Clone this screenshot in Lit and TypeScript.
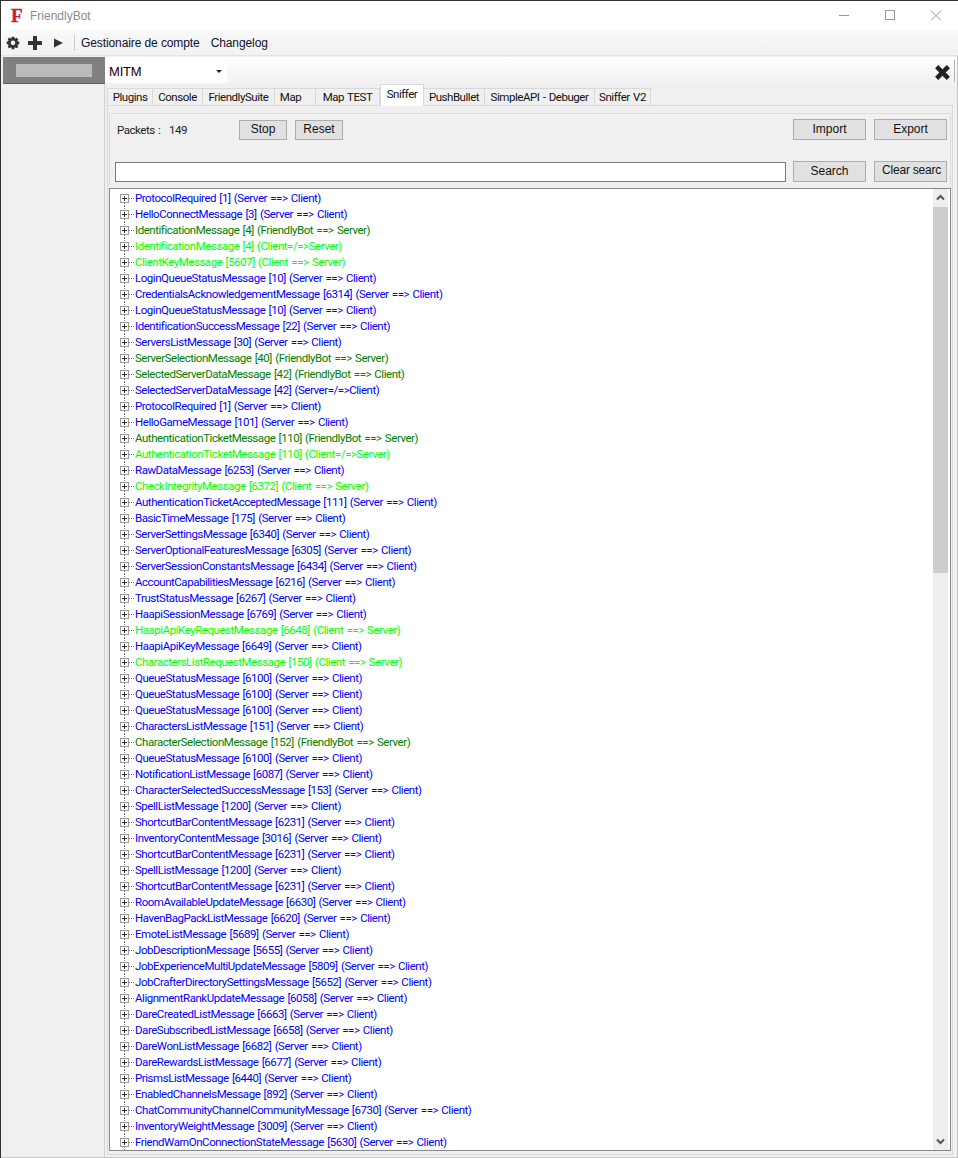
import { LitElement, html, css } from "lit";
import { customElement } from "lit/decorators.js";

type Row = [string, "b" | "g" | "l"];
const raw = `b ProtocolRequired [1] (Server ==> Client)
b HelloConnectMessage [3] (Server ==> Client)
g IdentificationMessage [4] (FriendlyBot ==> Server)
l IdentificationMessage [4] (Client=/=>Server)
l ClientKeyMessage [5607] (Client ==> Server)
b LoginQueueStatusMessage [10] (Server ==> Client)
b CredentialsAcknowledgementMessage [6314] (Server ==> Client)
b LoginQueueStatusMessage [10] (Server ==> Client)
b IdentificationSuccessMessage [22] (Server ==> Client)
b ServersListMessage [30] (Server ==> Client)
g ServerSelectionMessage [40] (FriendlyBot ==> Server)
g SelectedServerDataMessage [42] (FriendlyBot ==> Client)
b SelectedServerDataMessage [42] (Server=/=>Client)
b ProtocolRequired [1] (Server ==> Client)
b HelloGameMessage [101] (Server ==> Client)
g AuthenticationTicketMessage [110] (FriendlyBot ==> Server)
l AuthenticationTicketMessage [110] (Client=/=>Server)
b RawDataMessage [6253] (Server ==> Client)
l CheckIntegrityMessage [6372] (Client ==> Server)
b AuthenticationTicketAcceptedMessage [111] (Server ==> Client)
b BasicTimeMessage [175] (Server ==> Client)
b ServerSettingsMessage [6340] (Server ==> Client)
b ServerOptionalFeaturesMessage [6305] (Server ==> Client)
b ServerSessionConstantsMessage [6434] (Server ==> Client)
b AccountCapabilitiesMessage [6216] (Server ==> Client)
b TrustStatusMessage [6267] (Server ==> Client)
b HaapiSessionMessage [6769] (Server ==> Client)
l HaapiApiKeyRequestMessage [6648] (Client ==> Server)
b HaapiApiKeyMessage [6649] (Server ==> Client)
l CharactersListRequestMessage [150] (Client ==> Server)
b QueueStatusMessage [6100] (Server ==> Client)
b QueueStatusMessage [6100] (Server ==> Client)
b QueueStatusMessage [6100] (Server ==> Client)
b CharactersListMessage [151] (Server ==> Client)
g CharacterSelectionMessage [152] (FriendlyBot ==> Server)
b QueueStatusMessage [6100] (Server ==> Client)
b NotificationListMessage [6087] (Server ==> Client)
b CharacterSelectedSuccessMessage [153] (Server ==> Client)
b SpellListMessage [1200] (Server ==> Client)
b ShortcutBarContentMessage [6231] (Server ==> Client)
b InventoryContentMessage [3016] (Server ==> Client)
b ShortcutBarContentMessage [6231] (Server ==> Client)
b SpellListMessage [1200] (Server ==> Client)
b ShortcutBarContentMessage [6231] (Server ==> Client)
b RoomAvailableUpdateMessage [6630] (Server ==> Client)
b HavenBagPackListMessage [6620] (Server ==> Client)
b EmoteListMessage [5689] (Server ==> Client)
b JobDescriptionMessage [5655] (Server ==> Client)
b JobExperienceMultiUpdateMessage [5809] (Server ==> Client)
b JobCrafterDirectorySettingsMessage [5652] (Server ==> Client)
b AlignmentRankUpdateMessage [6058] (Server ==> Client)
b DareCreatedListMessage [6663] (Server ==> Client)
b DareSubscribedListMessage [6658] (Server ==> Client)
b DareWonListMessage [6682] (Server ==> Client)
b DareRewardsListMessage [6677] (Server ==> Client)
b PrismsListMessage [6440] (Server ==> Client)
b EnabledChannelsMessage [892] (Server ==> Client)
b ChatCommunityChannelCommunityMessage [6730] (Server ==> Client)
b InventoryWeightMessage [3009] (Server ==> Client)
b FriendWarnOnConnectionStateMessage [5630] (Server ==> Client)`;
const rows: Row[] = raw.split("\n").map((l) => [l.slice(2), l[0] as Row[1]]);

const tabs: [string, number, number][] = [
  ["Plugins", 46, 0], ["Console", 50, 0], ["FriendlySuite", 72, 0], ["Map", 41, 9], ["Map TEST", 64, 0],
  ["Sniffer", 44, 0], ["PushBullet", 61, 0], ["SimpleAPI - Debuger", 110, 0], ["Sniffer V2", 56, 0],
];

const gearPath = "M6.2 0h3.6l.4 2.1 1.2.5 1.8-1.2 2.4 2.4-1.2 1.8.5 1.2 2.1.4v3.6l-2.1.4-.5 1.2 1.2 1.8-2.4 2.4-1.8-1.2-1.2.5-.4 2.1H6.2l-.4-2.1-1.2-.5-1.8 1.2-2.4-2.4 1.2-1.8-.5-1.2L-1 10.6V7l2.1-.4.5-1.2-1.2-1.800 2.4-2.400 1.800 1.200 1.200-.5z";

@customElement("app-root")
export class AppRoot extends LitElement {
  static styles = css`
    :host {
      display: flex; flex-direction: column; width: 958px; height: 1158px; box-sizing: border-box;
      background: #f0f0f0; border-top: 1px solid #333; border-left: 1px solid #333; overflow: hidden;
      font: 12px "Liberation Sans", Arial, sans-serif; color: #000;
    }
    .narrow { font: 11.5px Roboto, sans-serif; letter-spacing: -0.46px; word-spacing: 0.9px; }
    .title { height: 29px; flex: none; background: #fff; display: flex; align-items: center; color: #8c8c8c; }
    .logo { width: 13px; margin-left: 10px; font: bold 19px "Liberation Serif", serif; color: #c4202c; line-height: 16px; -webkit-text-stroke: 0.4px #c4202c; }
    .appname { margin-left: 6px; font-size: 12px; }
    .caps { margin-left: auto; display: flex; align-items: center; margin-right: -1px; }
    .caps svg { display: block; width: 46px; height: 29px; }
    .toolbar { height: 26px; flex: none; display: flex; align-items: center; background: linear-gradient(#fafafa, #f1f1f1); }
    .tools { display: flex; align-items: center; padding-left: 5px; }
    .tools svg { display: block; }
    .plus { margin-left: 7px; }
    .play { margin-left: 10px; }
    .sep { width: 1px; height: 16px; background: #c9c9c9; margin: 0 6px 0 9px; }
    .menu { display: flex; gap: 11px; font-size: 12px; color: #101030; letter-spacing: -0.1px; }
    .main { flex: 1; min-height: 0; display: flex; padding: 1px 0 0 2px; border-right: 1px solid #c4c4c4; border-bottom: 1px solid #c4c4c4; border-top: 1px solid #e4e4e4; margin-top: -1px; }
    .side { width: 101px; flex: none; border-right: 1px solid #d0d0d0; background: #f0f0f0; }
    .sideitem { height: 27px; background: #808080; border-bottom: 1px solid #5f5f5f; box-sizing: border-box; display: flex; align-items: center; justify-content: center; margin-right: -1px; }
    .sideitem i { display: block; width: 76px; height: 13px; background: #bbb; }
    .content { flex: 1; min-width: 0; display: flex; flex-direction: column; background: linear-gradient(#fff 0, #f0f0f0 28px); }
    .top { height: 27px; flex: none; display: flex; align-items: flex-start; padding-top: 2px; }
    .combo { width: 122px; height: 24px; background: #fff; display: flex; align-items: center; padding-left: 4px; box-sizing: border-box; font-size: 13px; letter-spacing: -0.2px; color: #200; position: relative; }
    .combo svg { position: absolute; right: 5px; top: 11px; }
    .closex { margin-left: auto; margin-right: 3px; margin-top: 5px; display: block; }
    .edge { width: 1px; height: 22px; background: #b4b4b4; margin: 1px 2px 0 0; flex: none; }
    .tabs { display: flex; align-items: flex-end; height: 20px; flex: none; padding-left: 2px; margin-top: -1px; position: relative; z-index: 1; }
    .tab { height: 17px; box-sizing: border-box; border: 1px solid #d9d9d9; border-left-width: 0; border-bottom: 0; text-align: center; line-height: 17px; background: #f0f0f0; white-space: nowrap; color: #111; }
    .tab:first-child { border-left-width: 1px; }
    .tab.on { height: 22px; background: #fff; line-height: 18px; border-left-width: 1px; margin-bottom: -1px; }
    .panel { margin: 0 4px 2px 2px; flex: 1; min-height: 0; background: #f0f0f0; border: 1px solid #d9d9d9; padding: 7px 1px 3px 1px; display: flex; flex-direction: column; }
    .head { height: 73px; flex: none; box-sizing: border-box; border: 1px solid #dcdcdc; border-bottom: 0; display: grid; grid-template-columns: 1fr 73px 73px; grid-template-rows: 21px 21px; column-gap: 8px; row-gap: 21px; padding: 5px 3px 0 5px; }
    .packets { display: flex; align-items: flex-end; }
    .lbl { width: 122px; height: 20px; flex: none; padding-left: 2px; color: #222; display: flex; align-items: center; }
    .lbl b { font-weight: 400; width: 52px; flex: none; }
    .btn { box-sizing: border-box; background: #e1e1e1; border: 1px solid #adadad; display: flex; align-items: center; justify-content: center; color: #111; overflow: hidden; white-space: nowrap; padding-bottom: 2px; }
    .small { width: 48px; height: 20px; margin-right: 8px; }
    .input { height: 20px; margin: 1px -1px 0 0; box-sizing: border-box; border: 1px solid #7a7a7a; background: #fff; }
    .clear { justify-content: flex-start; padding: 0 0 3px 7px; letter-spacing: -0.2px; }
    .tree { flex: 1; min-height: 0; display: flex; background: #fff; border: 1px solid #828790; box-sizing: border-box; margin-top: 2px; }
    .list { flex: 1; min-width: 0; overflow: hidden; padding-left: 6px; padding-top: 1px; }
    .row { height: 16px; display: flex; align-items: center; white-space: nowrap; line-height: 16px; }
    .row svg { flex: none; display: block; }
    .b { color: #0000ff; } .g { color: #008000; } .l { color: #00ff00; }
    .sb { width: 15px; flex: none; margin: 0 2px 0 0; background: #eee; display: flex; flex-direction: column; align-items: center; }
    .sb svg { display: block; flex: none; }
    .thumb { width: 15px; height: 366px; background: #cdcdcd; flex: none; }
    .sp { flex: 1; }
  `;

  private exp(first: boolean) {
    return html`<svg width="19" height="16" viewBox="0 0 19 16">
      <path d="${first ? "" : "M8.500 0v4"}M8.500 13v3M13 8.500h5" stroke="#777" stroke-dasharray="1 1" fill="none" shape-rendering="crispEdges"/>
      <rect x="4.500" y="4.500" width="8" height="8" fill="#fff" stroke="#9a9a9a" shape-rendering="crispEdges"/>
      <path d="M6 8.500h5M8.500 6v5" stroke="#333" fill="none" shape-rendering="crispEdges"/>
    </svg>`;
  }

  render() {
    return html`
      <div class="title">
        <span class="logo">F</span><span class="appname">FriendlyBot</span>
        <div class="caps">
          <svg viewBox="0 0 46 29"><path d="M18 14.500h10" stroke="#999"/></svg>
          <svg viewBox="0 0 46 29"><rect x="18.500" y="9.500" width="9" height="9" fill="none" stroke="#999"/></svg>
          <svg viewBox="0 0 46 29"><path d="M18 9.500l10 10M28 9.500l-10 10" stroke="#999" fill="none"/></svg>
        </div>
      </div>
      <div class="toolbar">
        <div class="tools">
          <svg width="14" height="14" viewBox="-1.500 -1 19 20"><path fill="#333" fill-rule="evenodd" d="${gearPath}M8 5.500a3.300 3.300 0 1 0 0 6.600 3.300 3.300 0 0 0 0-6.600z"/></svg>
          <svg class="plus" width="16" height="16" viewBox="0 0 16 16"><path d="M6 1h4v5h5v4h-5v5H6v-5H1V6h5z" fill="#333"/></svg>
          <svg class="play" width="12" height="12" viewBox="0 0 12 12"><path d="M1 1.500l9 4.500-9 4.500z" fill="#333"/></svg>
          <div class="sep"></div>
        </div>
        <div class="menu"><span>Gestionaire de compte</span><span>Changelog</span></div>
      </div>
      <div class="main">
        <div class="side"><div class="sideitem"><i></i></div></div>
        <div class="content">
          <div class="top">
            <div class="combo">MITM<svg width="6" height="3" viewBox="0 0 6 3"><path d="M0 0h6L3 3z" fill="#222"/></svg></div>
            <svg class="closex" width="17" height="17" viewBox="0 0 16 16"><path d="M1 4l3-3 4 4 4-4 3 3-4 4 4 4-3 3-4-4-4 4-3-3 4-4z" fill="#222"/></svg>
            <div class="edge"></div>
          </div>
          <div class="tabs narrow">${tabs.map(([t, w, p]) => html`<div class="tab ${t === "Sniffer" ? "on" : ""}" style="width:${w}px;padding-right:${p}px">${t}</div>`)}</div>
          <div class="panel">
            <div class="head">
              <div class="packets">
                <span class="lbl narrow"><b>Packets :</b><span>149</span></span>
                <div class="btn small">Stop</div><div class="btn small">Reset</div>
              </div>
              <div class="btn">Import</div><div class="btn">Export</div>
              <div class="input"></div>
              <div class="btn">Search</div><div class="btn clear">Clear searc</div>
            </div>
            <div class="tree">
              <div class="list narrow">
                ${rows.map(([t, c], i) => html`<div class="row">${this.exp(i === 0)}<span class=${c}>${t}</span></div>`)}
              </div>
              <div class="sb">
                <svg width="15" height="18" viewBox="0 0 15 18"><path d="M4 10.500l3.500-3.500 3.500 3.500" stroke="#555" stroke-width="2" fill="none"/></svg>
                <div class="thumb"></div><div class="sp"></div>
                <svg width="15" height="18" viewBox="0 0 15 18"><path d="M4 7.500l3.500 3.500 3.500-3.500" stroke="#555" stroke-width="2" fill="none"/></svg>
              </div>
            </div>
          </div>
        </div>
      </div>`;
  }
}
